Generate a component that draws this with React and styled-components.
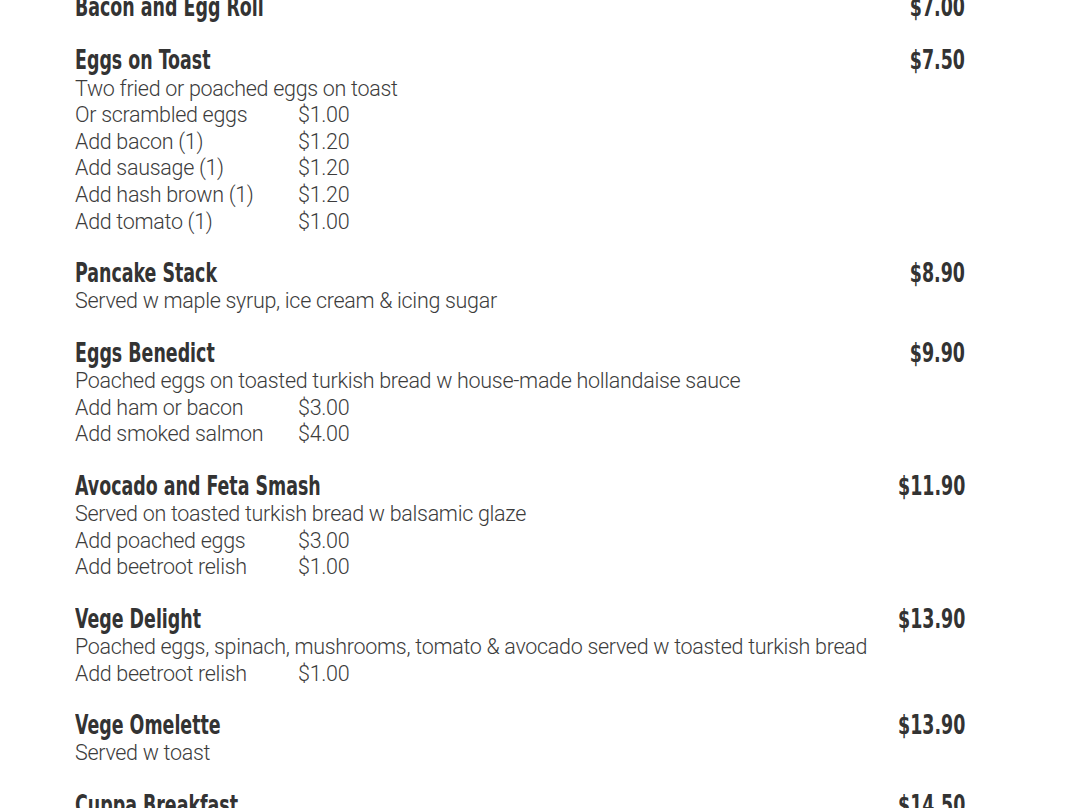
import styled, { createGlobalStyle } from "styled-components";

const GlobalStyle = createGlobalStyle`
  html, body {
    margin: 0;
    padding: 0;
    background: #ffffff;
  }
  body {
    overflow: hidden;
  }
`;

const Page = styled.div`
  width: 1080px;
  height: 808px;
  overflow: hidden;
  background: #fff;
`;

const Menu = styled.div`
  width: 890px;
  margin: -7px 0 0 75px;
  display: flex;
  flex-direction: column;
  gap: 23.5px;
`;

const Item = styled.section`
  display: flex;
  flex-direction: column;
`;

const ItemHead = styled.div`
  display: flex;
  justify-content: space-between;
  align-items: flex-start;
  height: 29.5px;
  line-height: 28px;
  font-family: "DejaVu Sans", "Liberation Sans", sans-serif;
  font-stretch: condensed;
  font-weight: 700;
  font-size: 26px;
  color: #333333;
`;

// fake a narrow bold face (Helvetica Condensed in the original)
const Condensed = styled.span`
  display: inline-block;
  white-space: nowrap;
  transform: scaleX(0.745);
  transform-origin: ${({ $end }) => ($end ? "right" : "left")} center;
  margin: 0;
  font: inherit;
`;

const Line = styled.div`
  display: grid;
  grid-template-columns: ${({ $addon }) => ($addon ? "223px auto" : "auto")};
  justify-content: start;
  height: 26.67px;
  line-height: 26.67px;
  font-family: Roboto, "Liberation Sans", sans-serif;
  font-weight: 300;
  font-size: 21.5px;
  letter-spacing: -0.3px;
  color: #3c3c3c;
  white-space: nowrap;
`;

const items = [
  { name: "Bacon and Egg Roll", price: "$7.00" },
  {
    name: "Eggs on Toast",
    price: "$7.50",
    desc: "Two fried or poached eggs on toast",
    addons: [
      ["Or scrambled eggs", "$1.00"],
      ["Add bacon (1)", "$1.20"],
      ["Add sausage (1)", "$1.20"],
      ["Add hash brown (1)", "$1.20"],
      ["Add tomato (1)", "$1.00"],
    ],
  },
  {
    name: "Pancake Stack",
    price: "$8.90",
    desc: "Served w maple syrup, ice cream & icing sugar",
  },
  {
    name: "Eggs Benedict",
    price: "$9.90",
    desc: "Poached eggs on toasted turkish bread w house-made hollandaise sauce",
    addons: [
      ["Add ham or bacon", "$3.00"],
      ["Add smoked salmon", "$4.00"],
    ],
  },
  {
    name: "Avocado and Feta Smash",
    price: "$11.90",
    desc: "Served on toasted turkish bread w balsamic glaze",
    addons: [
      ["Add poached eggs", "$3.00"],
      ["Add beetroot relish", "$1.00"],
    ],
  },
  {
    name: "Vege Delight",
    price: "$13.90",
    desc: "Poached eggs, spinach, mushrooms, tomato & avocado served w toasted turkish bread",
    addons: [["Add beetroot relish", "$1.00"]],
  },
  { name: "Vege Omelette", price: "$13.90", desc: "Served w toast" },
  { name: "Cuppa Breakfast", price: "$14.50", desc: "" },
];

export default function App() {
  return (
    <Page>
      <GlobalStyle />
      <Menu>
        {items.map((item) => (
          <Item key={item.name}>
            <ItemHead>
              <Condensed as="h2">{item.name}</Condensed>
              <Condensed $end>{item.price}</Condensed>
            </ItemHead>
            {item.desc && <Line>{item.desc}</Line>}
            {item.addons &&
              item.addons.map(([label, cost]) => (
                <Line $addon key={label}>
                  <span>{label}</span>
                  <span>{cost}</span>
                </Line>
              ))}
          </Item>
        ))}
      </Menu>
    </Page>
  );
}
